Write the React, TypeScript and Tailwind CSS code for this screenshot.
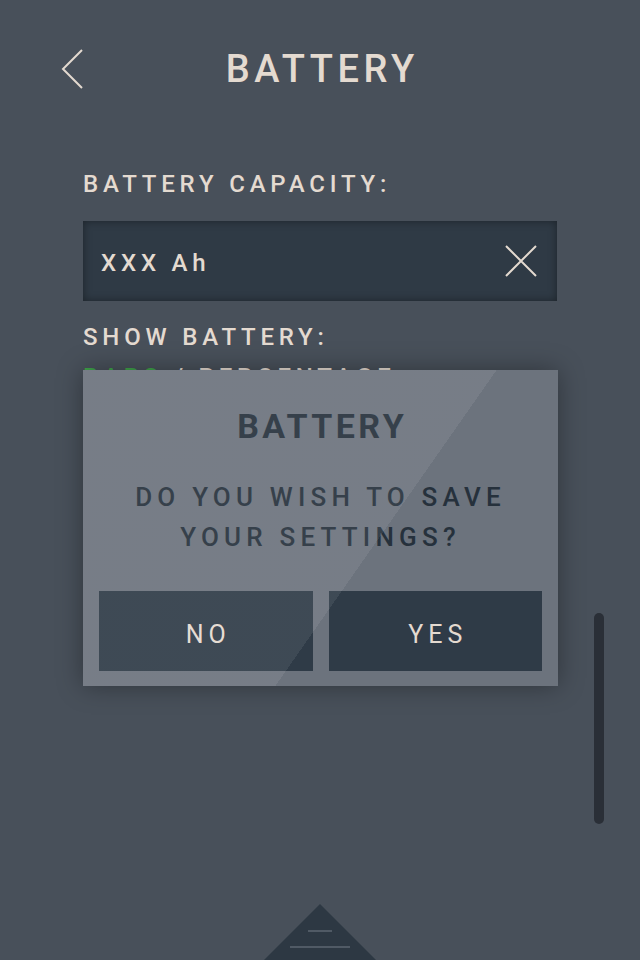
import React from 'react';

// Battery settings screen with the "save settings" confirm dialog on top.

function BackChevron() {
  return (
    <svg width="24" height="40" viewBox="0 0 24 40" fill="none">
      <path d="M21 1 L2 20 L21 39" stroke="#e4dad0" strokeWidth="2" />
    </svg>
  );
}

function ClearIcon() {
  return (
    <svg width="32" height="32" viewBox="0 0 32 32" fill="none">
      <path d="M1 1 L31 31 M31 1 L1 31" stroke="#e4dad0" strokeWidth="2" />
    </svg>
  );
}

function ConfirmDialog() {
  return (
    <div className="absolute left-[83px] top-[370px] w-[475px] h-[316px] bg-[#6c737d] shadow-[0_0_24px_rgba(0,0,0,0.35)]">
      <div className="flex flex-col items-center pt-[39px] px-4 pb-[15px]">
        <h2 className="text-[34px] leading-none font-bold tracking-[0.1em] pl-[0.1em] text-[#26313c]">BATTERY</h2>
        <p className="mt-[34px] text-[26px] leading-[40px] font-medium tracking-[0.2em] text-[#26313c] text-center">
          DO YOU WISH TO SAVE
          <br />
          YOUR SETTINGS?
        </p>
        <div className="mt-[34px] grid grid-cols-2 gap-4 w-full">
          <button className="h-20 pt-[7px] bg-[#2f3b47] text-[25px] font-normal tracking-[0.2em] pl-[0.2em] text-[#e4dad0]">NO</button>
          <button className="h-20 pt-[7px] bg-[#2f3b47] text-[25px] font-normal tracking-[0.2em] pl-[0.2em] text-[#e4dad0]">YES</button>
        </div>
      </div>
      {/* glare across the left half */}
      <div className="pointer-events-none absolute inset-0 bg-[linear-gradient(125deg,rgba(255,255,255,0.075)_59.4%,rgba(255,255,255,0)_59.4%)]" />
    </div>
  );
}

export default function App() {
  return (
    <div className="relative w-[640px] h-[960px] overflow-hidden bg-[#48505a] text-[#e4dad0] font-['Roboto',sans-serif] font-medium">
      <header className="flex h-[137px] items-center px-[61px]">
        <BackChevron />
        <h1 className="flex-1 text-center text-[38px] leading-none tracking-[0.12em] pl-[0.12em]">BATTERY</h1>
        <div className="w-6" />
      </header>

      <main className="px-[83px] pt-[35px]">
        <div className="text-[24px] leading-none tracking-[0.2em]">BATTERY CAPACITY:</div>
        <div className="mt-[25px] flex h-20 items-center justify-between bg-[#2f3a45] pl-[18px] pr-5 shadow-[inset_0_0_8px_rgba(0,0,0,0.4)]">
          <span className="text-[24px] leading-none tracking-[0.2em] pt-[3px]">XXX Ah</span>
          <ClearIcon />
        </div>
        <div className="mt-6 text-[24px] leading-none tracking-[0.2em]">SHOW BATTERY:</div>
        <div className="mt-4 text-[24px] leading-none tracking-[0.2em]">
          <span className="text-[#3fa34a]">BARS</span> / PERCENTAGE
        </div>
      </main>

      <ConfirmDialog />

      {/* scroll indicator */}
      <div className="absolute left-[594px] top-[613px] h-[211px] w-[10px] rounded-full bg-[#2a2f37]" />

      {/* bottom drawer handle */}
      <svg className="absolute left-[262px] top-[904px]" width="116" height="56" viewBox="0 0 116 56">
        <polygon points="58,0 116,58 0,58" fill="#2d3843" />
        <line x1="46" y1="27" x2="70" y2="27" stroke="#5c6670" strokeWidth="1.5" />
        <line x1="28" y1="43" x2="88" y2="43" stroke="#5c6670" strokeWidth="1.5" />
      </svg>
    </div>
  );
}
